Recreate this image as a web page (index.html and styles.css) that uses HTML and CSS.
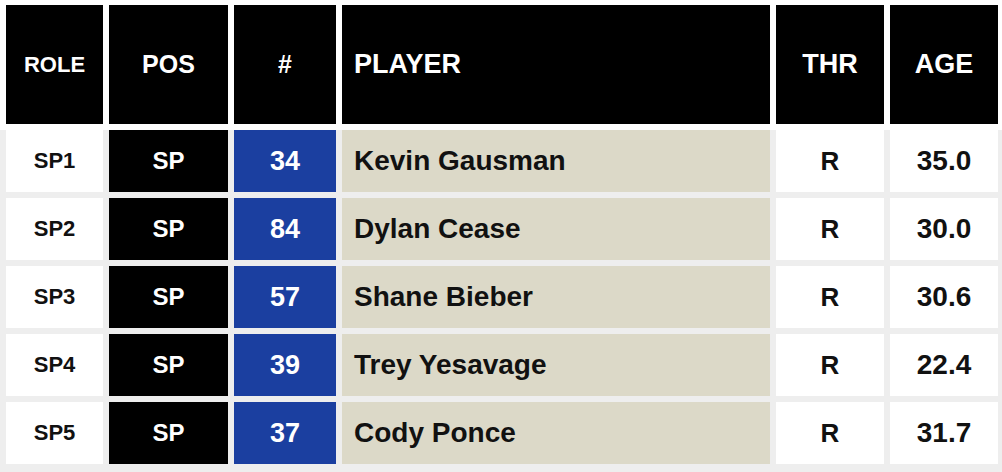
FILE: index.html
```html
<!DOCTYPE html>
<html>
<head>
<meta charset="utf-8">
<link rel="stylesheet" href="styles.css">
</head>
<body>
<div class="roster">
  <div class="row head">
    <div class="cell h role-h">ROLE</div>
    <div class="cell h pos-h">POS</div>
    <div class="cell h num-h">#</div>
    <div class="cell h player">PLAYER</div>
    <div class="cell h">THR</div>
    <div class="cell h">AGE</div>
  </div>
  <div class="body">
    <div class="row">
      <div class="cell role">SP1</div>
      <div class="cell pos">SP</div>
      <div class="cell num">34</div>
      <div class="cell player name">Kevin Gausman</div>
      <div class="cell thr">R</div>
      <div class="cell age">35.0</div>
    </div>
    <div class="row">
      <div class="cell role">SP2</div>
      <div class="cell pos">SP</div>
      <div class="cell num">84</div>
      <div class="cell player name">Dylan Cease</div>
      <div class="cell thr">R</div>
      <div class="cell age">30.0</div>
    </div>
    <div class="row">
      <div class="cell role">SP3</div>
      <div class="cell pos">SP</div>
      <div class="cell num">57</div>
      <div class="cell player name">Shane Bieber</div>
      <div class="cell thr">R</div>
      <div class="cell age">30.6</div>
    </div>
    <div class="row">
      <div class="cell role">SP4</div>
      <div class="cell pos">SP</div>
      <div class="cell num">39</div>
      <div class="cell player name">Trey Yesavage</div>
      <div class="cell thr">R</div>
      <div class="cell age">22.4</div>
    </div>
    <div class="row">
      <div class="cell role">SP5</div>
      <div class="cell pos">SP</div>
      <div class="cell num">37</div>
      <div class="cell player name">Cody Ponce</div>
      <div class="cell thr">R</div>
      <div class="cell age">31.7</div>
    </div>
  </div>
</div>
</body>
</html>
```

FILE: styles.css
```css
html, body {
  margin: 0;
  padding: 0;
  background: #ffffff;
}
body {
  width: 1002px;
  height: 472px;
  overflow: hidden;
  font-family: "Liberation Sans", Arial, sans-serif;
  font-weight: bold;
}
.roster {
  display: flex;
  flex-direction: column;
  padding-top: 5px;
}
.row {
  display: grid;
  grid-template-columns: 97px 119px 102px 428px 108px 108px;
  column-gap: 6px;
}
.head {
  padding-left: 6px;
  height: 119px;
}
.body {
  margin-top: 6px;
  background: #eeeeee;
  padding: 0 4px 8px 6px;
  display: flex;
  flex-direction: column;
  gap: 6px;
}
.body .row {
  height: 62px;
}
.cell {
  display: flex;
  align-items: center;
  justify-content: center;
  color: #111111;
}
.h {
  background: #000000;
  color: #ffffff;
  font-size: 27px;
}
.role-h {
  font-size: 22px;
}
.pos-h, .num-h {
  font-size: 25px;
}
.player {
  justify-content: flex-start;
  padding-left: 12px;
}
.role {
  background: #ffffff;
  font-size: 22px;
}
.pos {
  background: #000000;
  color: #ffffff;
  font-size: 24px;
}
.num {
  background: #1b3fa0;
  color: #ffffff;
  font-size: 27px;
}
.name {
  background: #dcd9c8;
  font-size: 28px;
}
.thr {
  background: #ffffff;
  font-size: 26px;
}
.age {
  background: #ffffff;
  font-size: 28px;
}
```
